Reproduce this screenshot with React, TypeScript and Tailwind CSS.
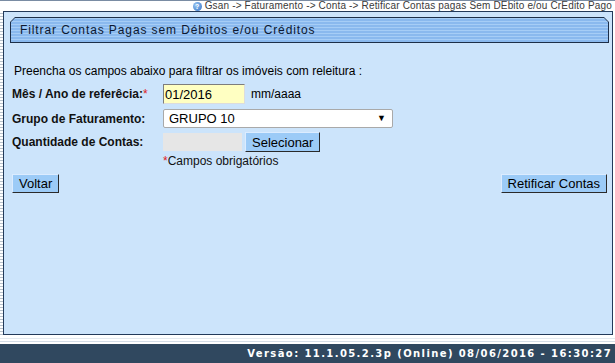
import React from "react";

export default function App() {
  const btn =
    "h-[19px] px-[6px] bg-[#9ccbf7] border border-[#dcecff] border-r-[#2a2a2a] border-b-[#2a2a2a] text-[13px] leading-none text-black flex items-center";
  return (
    <div className="w-[615px] h-[363px] flex flex-col bg-white overflow-hidden font-['Liberation_Sans',Arial,sans-serif]">
      {/* breadcrumb */}
      <div className="h-[11px] relative flex items-center justify-end pr-[3px] border-t border-t-[#7a8ca3]">
        <span className="w-[9px] h-[9px] rounded-full bg-[radial-gradient(circle_at_35%_35%,#9cc8f4,#2f6fc4)] text-white text-[7px] font-bold leading-[9px] text-center mr-[3px]">
          ?
        </span>
        <span className="text-[10px] leading-none tracking-[0.17px] text-[#3a3a3a] whitespace-nowrap">
          Gsan -&gt; Faturamento -&gt; Conta -&gt; Retificar Contas pagas Sem DEbito e/ou CrEdito Pago
        </span>
      </div>

      {/* middle */}
      <div className="h-[324px] flex">
        <div className="w-[3px] bg-[repeating-linear-gradient(180deg,#ffffff_0px,#ffffff_2px,#b8c2cc_2px,#b8c2cc_3px)]" />
        <div className="flex-1 mr-[2px] border border-[#233a5a] bg-[#cce4fb] flex flex-col">
          {/* title bar */}
          <div className="mt-[5px] ml-[6px] mr-[3px] h-[26px] bg-[#1d2f48] p-px [clip-path:polygon(5px_0,calc(100%_-_5px)_0,100%_5px,100%_100%,0_100%,0_5px)]">
            <div className="h-full flex items-center pl-[9px] bg-[repeating-linear-gradient(180deg,#a6cdf6_0px,#a6cdf6_1px,#8ab9ee_1px,#8ab9ee_3px)] [clip-path:polygon(4px_0,calc(100%_-_4px)_0,100%_4px,100%_100%,0_100%,0_4px)]">
              <span className="text-[12px] leading-none tracking-[0.9px] text-[#0c1830]">
                Filtrar Contas Pagas sem Débitos e/ou Créditos
              </span>
            </div>
          </div>

          {/* form */}
          <div className="pl-[8px] pr-[5px] flex flex-col">
            <div className="mt-[21px] h-[14px] pl-[2px] text-[12px] leading-[14px] text-black">
              Preencha os campos abaixo para filtrar os imóveis com releitura :
            </div>

            <div className="mt-[6px] h-[20px] flex items-center">
              <div className="w-[151px] text-[12px] font-bold text-[#111]">
                Mês / Ano de referêcia:<span className="text-[#e02020] font-normal">*</span>
              </div>
              <div className="w-[82px] h-[20px] bg-[#ffffc2] border border-[#7d7d7d] border-r-[#dcdcdc] border-b-[#dcdcdc] text-[13px] leading-none flex items-center pl-[1px]">
                01/2016
              </div>
              <span className="ml-[6px] text-[12px] text-black">mm/aaaa</span>
            </div>

            <div className="mt-[5px] h-[19px] flex items-center">
              <div className="w-[151px] text-[12px] font-bold text-[#111]">Grupo de Faturamento:</div>
              <div className="w-[230px] h-[19px] bg-white border border-[#a9a9a9] rounded-[2px] flex items-center justify-between pl-[5px] pr-[6px]">
                <span className="text-[13px] leading-none">GRUPO 10</span>
                <span className="text-[9px] leading-none text-black">▼</span>
              </div>
            </div>

            <div className="mt-[4px] h-[20px] flex items-center">
              <div className="w-[151px] text-[12px] font-bold text-[#111]">Quantidade de Contas:</div>
              <div className="w-[79px] h-[18px] bg-[#e6e6e6]" />
              <div className="ml-[3px] h-[20px] px-[6px] bg-[#9ccbf7] border border-[#dcecff] border-r-[#2a2a2a] border-b-[#2a2a2a] text-[13px] leading-none text-black flex items-center">
                Selecionar
              </div>
            </div>

            <div className="mt-[2px] h-[14px] pl-[151px] text-[12px] leading-[14px] text-[#111]">
              <span className="text-[#e02020]">*</span>Campos obrigatórios
            </div>

            <div className="mt-[6px] flex justify-between">
              <div className={btn}>Voltar</div>
              <div className={btn}>Retificar Contas</div>
            </div>
          </div>
        </div>
      </div>

      {/* gap strip */}
      <div className="h-[9px] flex flex-col">
        <div className="h-[3px]" />
        <div className="h-px bg-[#e3e9ef]" />
        <div className="h-[2px]" />
        <div className="h-px bg-[#d5dde6]" />
      </div>

      {/* footer */}
      <div className="flex-1 bg-[#30485f] flex items-center justify-end pr-[3px]">
        <span className="text-[10px] font-bold tracking-[1.4px] text-white leading-none whitespace-nowrap font-['DejaVu_Sans',Verdana,sans-serif]">
          Versão: 11.1.05.2.3p (Online) 08/06/2016 - 16:30:27
        </span>
      </div>
    </div>
  );
}
